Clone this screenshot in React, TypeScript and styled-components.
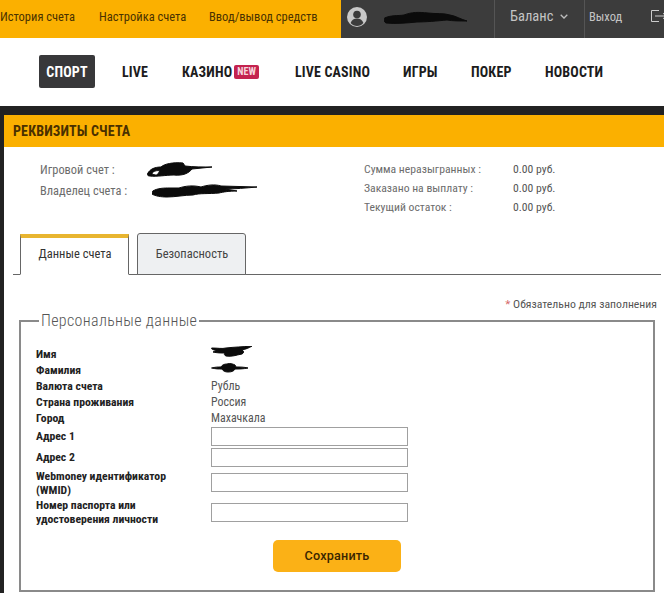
import React from "react";
import styled, { createGlobalStyle } from "styled-components";

const Global = createGlobalStyle`
  html, body { margin: 0; padding: 0; background: #fff; }
  body { width: 664px; height: 593px; overflow: hidden; font-family: "Roboto Condensed", Roboto, "Liberation Sans", sans-serif; font-stretch: 75%; }
  * { box-sizing: border-box; }
`;

const TopBar = styled.header`display: flex; height: 38px;`;
const AccountLinks = styled.nav`
  flex: none; width: 341px; padding-bottom: 6px; background: #fbb000; display: flex; align-items: center; font-size: 12.5px; color: #4a3200;
`;
const AccountLink = styled.span<{ $w: number }>`width: ${p => p.$w}px; white-space: nowrap;`;
const UserBar = styled.div`flex: 1; min-width: 0; background: #3c3c3c; display: flex; align-items: center; color: #c4c4c4; overflow: hidden;`;
const UserBlock = styled.div`flex: none; width: 154px; height: 100%; padding: 0 0 5px 6px; display: flex; align-items: center; gap: 17px; border-right: 1px solid #555;`;
const BalanceBlock = styled.div`flex: none; width: 90px; height: 100%; padding: 0 0 6px 15px; display: flex; align-items: center; gap: 7px; font-size: 14.5px; border-right: 1px solid #555;`;
const ExitBlock = styled.div`flex: none; height: 100%; padding: 0 0 6px 4px; display: flex; align-items: center; gap: 29px; font-size: 12.5px;`;

const MainNav = styled.nav`height: 68px; background: #fff; padding: 0 0 1px 39px; display: flex; align-items: center;`;
const NavItem = styled.span<{ $w: number }>`
  width: ${p => p.$w}px; height: 33px; display: flex; align-items: center; white-space: nowrap;
  font-size: 14px; font-weight: 700; letter-spacing: .15px; color: #1c1c1c;
`;
const SportButton = styled.span`
  width: 56px; height: 33px; margin-right: 27px; background: #38383a; color: #fff; border-radius: 2px;
  display: flex; align-items: center; justify-content: center; font-size: 14px; font-weight: 700; letter-spacing: .15px;
`;
const NewBadge = styled.span`
  margin-left: 2px; width: 25px; height: 14px; border-radius: 2px; background: #c4234f; color: #f6d5dd;
  font-size: 10px; font-weight: 700; display: flex; align-items: center; justify-content: center;
`;
const Band = styled.div`height: 9px; background: #222;`;

const Page = styled.main`border-left: 4px solid #222; height: 478px; background: #fff;`;
const Heading = styled.h1`
  margin: 0; height: 32px; padding-left: 9px; background: #fbb000; display: flex; align-items: center;
  font-size: 14px; font-weight: 700; color: #4a3000; letter-spacing: .15px;
`;
const Summary = styled.section`display: flex; height: 87px; padding: 12px 0 0 36px; color: #6c6c6c;`;
const Owner = styled.div`width: 324px; font-size: 12.4px;`;
const OwnerRow = styled.div`height: 21px; display: flex; align-items: center;`;
const OwnerLabel = styled.span`width: 106px;`;
const Totals = styled.div`font-size: 11.7px; display: grid; grid-template-columns: 149px auto; grid-auto-rows: 19px; align-items: center; align-content: start;`;
const TotalValue = styled.span`color: #555;`;

const Tabs = styled.div`margin: 0 3px 0 9px; height: 41px; border-bottom: 1px solid #666; padding-left: 7px; display: flex; align-items: flex-end; gap: 8px;`;
const Tab = styled.div<{ $active?: boolean }>`
  width: 109px; height: ${p => p.$active ? 41 : 42}px; margin-bottom: -1px; padding-left: 1px;
  display: flex; align-items: center; justify-content: center; font-size: 12.5px;
  ${p => p.$active
    ? "background:#fff;border:1px solid #666;border-top:4px solid #e8b530;border-bottom:1px solid #fff;color:#333;padding-bottom:5px;"
    : "background:#eef0f2;border:1px solid #666;border-radius:3px 3px 0 0;color:#444;padding-bottom:2px;"}
`;
const Required = styled.p`margin: 0; height: 37px; padding: 22px 7px 0 0; text-align: right; font-size: 11.75px; line-height: 15px; color: #555;`;
const Star = styled.span`color: #d56a6a;`;

const Fieldset = styled.fieldset`
  margin: 0 9px 0 15px; padding: 0 0 0 15px; height: 280px; border: 2px solid #8a8a8a; border-radius: 0; min-width: 0;
`;
const Legend = styled.legend`margin-left: 3px; padding: 0 2px; font-size: 16px; font-weight: 300; line-height: 18px; color: #555; letter-spacing: .35px;`;
const FormGrid = styled.div`display: grid; grid-template-columns: 175px 197px; align-items: center; margin-top: 16px;`;
const FieldLabel = styled.div<{ $h: number; $lift?: boolean }>`
  height: ${p => p.$h}px; padding-bottom: ${p => p.$lift ? 2 : 0}px; display: flex; align-items: center;
  font-size: 11.7px; font-weight: 700; line-height: 14px; color: #222;
`;
const FieldValue = styled.div`font-size: 11.9px; color: #555; height: 16px; line-height: 16px;`;
const TextInput = styled.input`
  display: block; width: 197px; height: 19px; padding: 0 3px; border: 1px solid #a0a0a0; background: #fff; border-radius: 0; outline: none;
`;
const Actions = styled.div`margin: 13px 0 0 237px;`;
const Save = styled.button`
  width: 128px; height: 32px; padding: 0 0 2px; border: none; border-radius: 5px; background: #fbb116; color: #3a2600;
  font: 500 12.6px "Roboto", "Liberation Sans", sans-serif; letter-spacing: .2px;
`;
const Scribble = styled.svg<{ $left?: number }>`display: block; flex: none; margin-left: ${p => p.$left ?? 0}px;`;

const Avatar = () => (
  <svg width="20" height="20" viewBox="0 0 20 20" style={{ flex: "none" }}>
    <circle cx="10" cy="10" r="10" fill="#c9c9c9" />
    <circle cx="10" cy="7.500" r="3.800" fill="#3c3c3c" />
    <path d="M3.600 16c1-3.200 3.600-4.600 6.400-4.600s5.400 1.400 6.400 4.600C14.800 18 12.500 19 10 19s-4.800-1-6.400-3z" fill="#3c3c3c" />
  </svg>
);
const Chevron = () => (
  <svg width="8" height="5" viewBox="0 0 8 5" fill="none" stroke="#bdbdbd" strokeWidth="1.3"><path d="M.7.8 4 4l3.300-3.200" /></svg>
);
const LogoutIcon = () => (
  <svg width="16" height="12" viewBox="0 0 16 12" fill="none" stroke="#ccc" strokeWidth="1" style={{ flex: "none" }}>
    <path d="M8 .5H.5v11H8M4 6h11M12 3.200 15 6l-3 2.800" />
  </svg>
);
const Mark = ({ w, h, d, sw = 1, left }: { w: number; h: number; d: string; sw?: number; left?: number }) => (
  <Scribble $left={left} width={w} height={h} viewBox={`0 0 ${w} ${h}`} fill="#0b0b0b" stroke="#0b0b0b" strokeWidth={sw} strokeLinejoin="round" strokeLinecap="round">
    <path d={d} />
  </Scribble>
);

const rows: [string, string][] = [["Валюта счета", "Рубль"], ["Страна проживания", "Россия"], ["Город", "Махачкала"]];

export default function App() {
  return (
    <>
      <Global />
      <TopBar>
        <AccountLinks>
          <AccountLink $w={99}>История счета</AccountLink>
          <AccountLink $w={110}>Настройка счета</AccountLink>
          <AccountLink $w={120}>Ввод/вывод средств</AccountLink>
        </AccountLinks>
        <UserBar>
          <UserBlock>
            <Avatar />
            <Mark w={84} h={14} d="M1 8C6 5 14 6 20 5c8-3 14-3 24-2 8 1 16 0 22 2 6 1 10 4 17 6-8 0-14 0-20-1-10 1-22 2-30 2-10 1-22 2-31 1C0 12 0 10 1 8z" />
          </UserBlock>
          <BalanceBlock>Баланс <Chevron /></BalanceBlock>
          <ExitBlock>Выход <LogoutIcon /></ExitBlock>
        </UserBar>
      </TopBar>
      <MainNav>
        <SportButton>СПОРТ</SportButton>
        <NavItem $w={60}>LIVE</NavItem>
        <NavItem $w={113}>КАЗИНО<NewBadge>NEW</NewBadge></NavItem>
        <NavItem $w={108}>LIVE CASINO</NavItem>
        <NavItem $w={68}>ИГРЫ</NavItem>
        <NavItem $w={74}>ПОКЕР</NavItem>
        <NavItem $w={70}>НОВОСТИ</NavItem>
      </MainNav>
      <Band />
      <Page>
        <Heading>РЕКВИЗИТЫ СЧЕТА</Heading>
        <Summary>
          <Owner>
            <OwnerRow>
              <OwnerLabel>Игровой счет :</OwnerLabel>
              <Mark left={1} w={66} h={18} d="M1 12C3 8 8 6 14 6c3-3 12-5 22-4l2 3c8 1 18 1 27 1l-20 2c-3 4-9 7-18 6-8 0-18 2-24 1C0 15 0 13 1 12zM6 11c-2 2 0 3 4 3l3-4c-3-1-5 0-7 1z" />
            </OwnerRow>
            <OwnerRow>
              <OwnerLabel>Владелец счета :</OwnerLabel>
              <Mark left={6} w={106} h={16} d="M1 8c4-3 12-3 16-3l10 0c6-2 14-3 22-1 6-2 14-3 20-1 12 0 24 1 36 1-11 1-22 2-32 2l12 2c-8 0-14 1-18 2-10 1-20 0-26 2-8 0-18 2-26 2-6 0-12-1-15-3C0 10 0 9 1 8z" />
            </OwnerRow>
          </Owner>
          <Totals>
            <span>Сумма неразыгранных :</span><TotalValue>0.00 руб.</TotalValue>
            <span>Заказано на выплату :</span><TotalValue>0.00 руб.</TotalValue>
            <span>Текущий остаток :</span><TotalValue>0.00 руб.</TotalValue>
          </Totals>
        </Summary>
        <Tabs>
          <Tab $active>Данные счета</Tab>
          <Tab>Безопасность</Tab>
        </Tabs>
        <Required><Star>*</Star> Обязательно для заполнения</Required>
        <Fieldset>
          <Legend>Персональные данные</Legend>
          <FormGrid>
            <FieldLabel $h={16}>Имя</FieldLabel>
            <FieldValue><Mark w={42} h={12} d="M1 2c6 0 10 1 14 0 8-1 16-1 26-2-3 2-6 3-10 4 2 1 2 3 0 4-6 1-10 3-16 2-2-1-2-2-1-3-4 0-8 0-12-1 3-1 3-2 1-2l-2-1z" /></FieldValue>
            <FieldLabel $h={16}>Фамилия</FieldLabel>
            <FieldValue><Mark w={38} h={12} d="M1 6c3-1 6-1 9-1 1-2 3-3 6-3 3-1 6 0 8 1l1 2c4 0 8 0 12 1-5 1-9 1-13 1-1 2-3 3-7 3-3 0-5-1-6-3-3 0-7 0-10-1z" /></FieldValue>
            {rows.map(([l, v]) => (
              <React.Fragment key={l}>
                <FieldLabel $h={16}>{l}</FieldLabel>
                <FieldValue>{v}</FieldValue>
              </React.Fragment>
            ))}
            <FieldLabel $h={21} $lift>Адрес 1</FieldLabel>
            <TextInput />
            <FieldLabel $h={21} $lift>Адрес 2</FieldLabel>
            <TextInput />
            <FieldLabel $h={29}>Webmoney идентификатор<br />(WMID)</FieldLabel>
            <TextInput />
            <FieldLabel $h={30}>Номер паспорта или<br />удостоверения личности</FieldLabel>
            <TextInput />
          </FormGrid>
          <Actions><Save>Сохранить</Save></Actions>
        </Fieldset>
      </Page>
    </>
  );
}
